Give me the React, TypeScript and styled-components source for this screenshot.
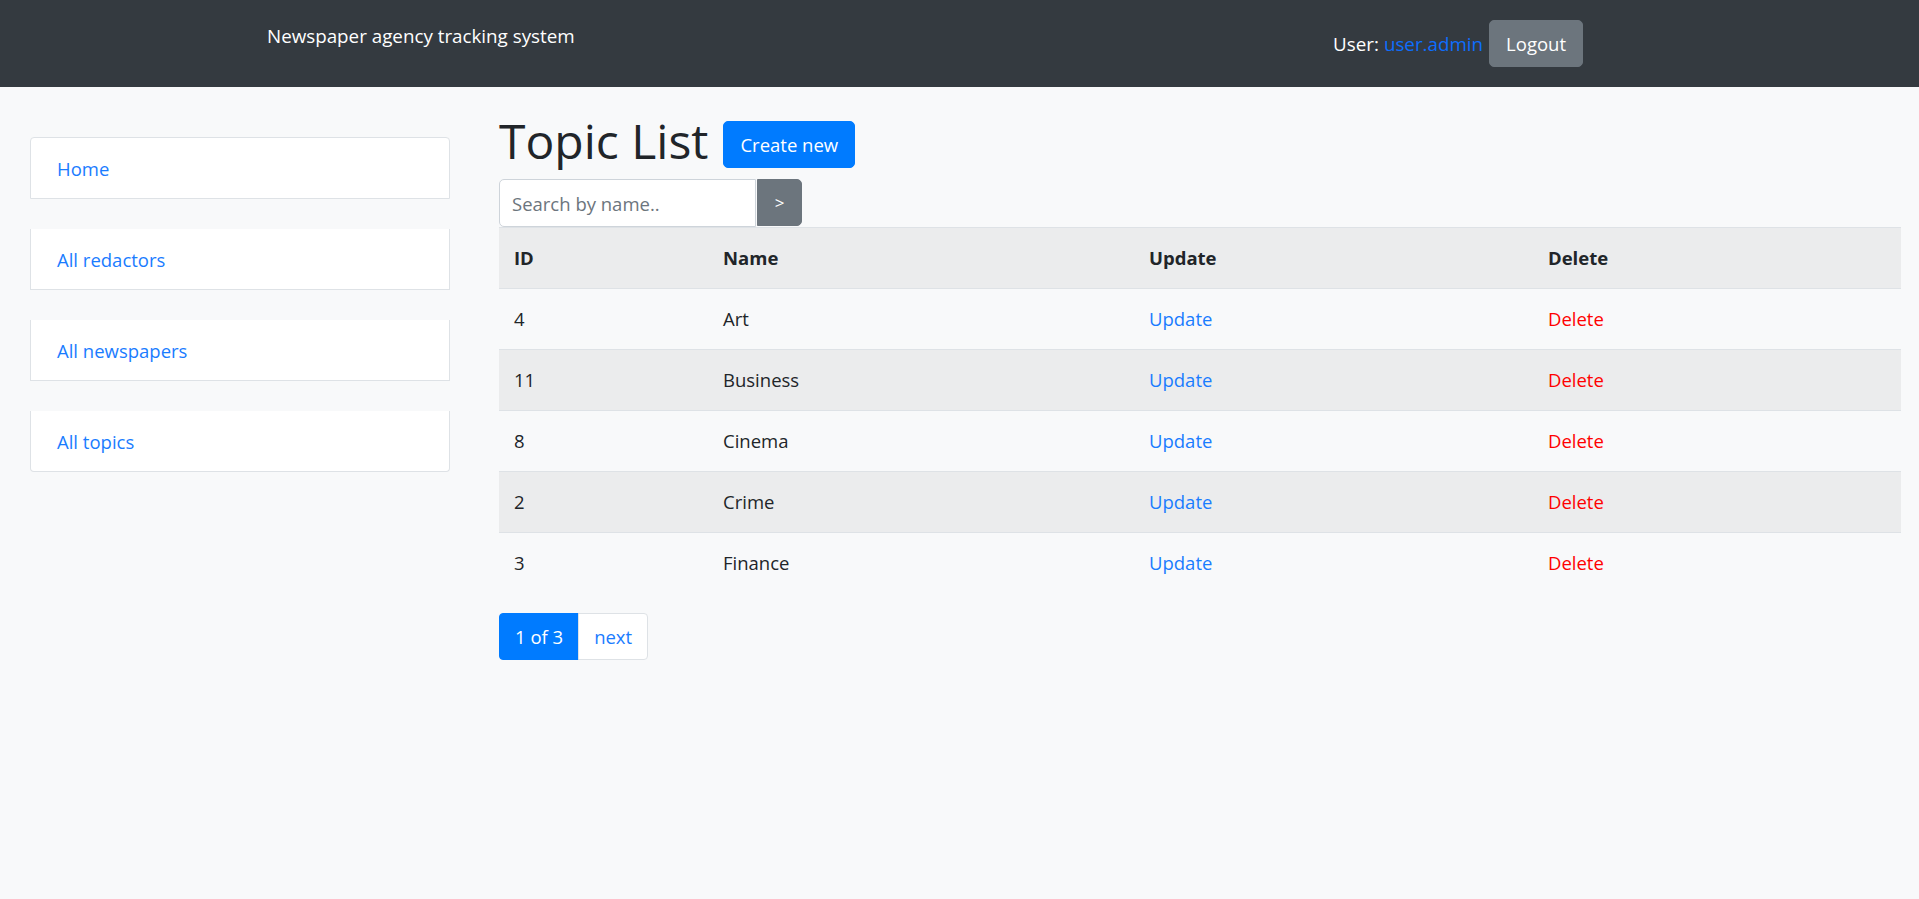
import React from "react";
import styled, { createGlobalStyle } from "styled-components";

const Global = createGlobalStyle`
  html, body { margin: 0; padding: 0; }
  body {
    background: #f8f9fa;
    font-family: "Segoe UI", "Open Sans", "Noto Sans", sans-serif;
    color: #212529;
  }
  * { box-sizing: border-box; }
`;

const Navbar = styled.nav`
  height: 87px;
  background: #343a40;
  display: flex;
  justify-content: space-between;
  align-items: flex-start;
  padding: 20px 336px 0 267px;
`;

const Brand = styled.div`
  color: #fff;
  font-size: 18.8px;
  line-height: 30px;
  margin-top: 1px;
`;

const UserBox = styled.div`
  display: flex;
  align-items: center;
  gap: 6px;
  color: #fff;
  font-size: 18.8px;
`;

const UserLink = styled.a`
  color: #0d6efd;
  text-decoration: none;
  margin-left: 5px;
`;

const Btn = styled.button<{ $variant: "primary" | "secondary" }>`
  font-family: inherit;
  font-size: 18.5px;
  line-height: 29px;
  padding: 8px 16px;
  border-radius: 5px;
  border: 1px solid ${(p) => (p.$variant === "primary" ? "#007bff" : "#6c757d")};
  background: ${(p) => (p.$variant === "primary" ? "#007bff" : "#6c757d")};
  color: #fff;
  cursor: pointer;
`;

const CreateBtn = styled(Btn)`
  margin-top: 6px;
`;

const Page = styled.div`
  display: grid;
  grid-template-columns: 420px 1fr;
  column-gap: 49px;
  padding: 0 18px 0 30px;
`;

const Sidebar = styled.ul`
  list-style: none;
  margin: 50px 0 0;
  padding: 0;
  display: flex;
  flex-direction: column;
  gap: 30px;
`;

const SideItem = styled.li<{ $first?: boolean; $last?: boolean }>`
  background: #fff;
  border: 1px solid #dee2e6;
  border-top-width: ${(p) => (p.$first ? "1px" : "0")};
  border-radius: ${(p) =>
    p.$first ? "4px 4px 0 0" : p.$last ? "0 0 4px 4px" : "0"};
  height: ${(p) => (p.$first ? "62px" : "61px")};
  display: flex;
  align-items: center;
  padding-left: 26px;
`;

const SideLink = styled.a`
  color: #1a7cff;
  text-decoration: none;
  font-size: 18.5px;
`;

const Main = styled.main`
  padding-top: 26px;
`;

const TitleRow = styled.div`
  display: flex;
  align-items: center;
  gap: 15px;
`;

const Title = styled.h1`
  margin: 0;
  font-size: 48px;
  font-weight: 500;
  line-height: 56px;
`;

const SearchForm = styled.form`
  display: flex;
  margin-top: 10px;
`;

const SearchInput = styled.input`
  width: 257px;
  height: 48px;
  border: 1px solid #ced4da;
  border-radius: 5px 0 0 5px;
  background: #fff;
  padding: 0 12px;
  font-family: inherit;
  font-size: 18.5px;
  color: #495057;
  outline: none;
  &::placeholder { color: #6c757d; }
`;

const SearchBtn = styled.button`
  width: 45px;
  height: 47px;
  border: 1px solid #6c757d;
  background: #6c757d;
  color: #fff;
  font-family: inherit;
  font-size: 17px;
  border-radius: 0 5px 5px 0;
  margin-left: 1px;
`;

const Table = styled.table`
  width: 100%;
  border-collapse: collapse;
  font-size: 18.5px;
`;

const Th = styled.th<{ $w: string }>`
  width: ${(p) => p.$w};
  text-align: left;
  font-weight: 700;
  padding: 15px 15px;
  line-height: 30px;
  border-top: 1px solid #dee2e6;
  border-bottom: 1px solid #dee2e6;
  background: #ebeced;
`;

const Tr = styled.tr<{ $striped: boolean; $last: boolean }>`
  background: ${(p) => (p.$striped ? "#ebeced" : "transparent")};
  border-bottom: ${(p) => (p.$last ? "none" : "1px solid #dee2e6")};
`;

const Td = styled.td`
  padding: 15px 15px;
  line-height: 30px;
`;

const CellLink = styled.a<{ $danger?: boolean }>`
  color: ${(p) => (p.$danger ? "#ff0000" : "#1a7cff")};
  text-decoration: none;
`;

const Pager = styled.div`
  display: flex;
  margin-top: 20px;
`;

const PageItem = styled.a<{ $active?: boolean }>`
  font-size: 18.5px;
  line-height: 29px;
  padding: 8px 15px;
  border: 1px solid ${(p) => (p.$active ? "#007bff" : "#dee2e6")};
  background: ${(p) => (p.$active ? "#007bff" : "#fff")};
  color: ${(p) => (p.$active ? "#fff" : "#1a7cff")};
  text-decoration: none;
  border-radius: ${(p) => (p.$active ? "4px 0 0 4px" : "0 4px 4px 0")};
  margin-left: ${(p) => (p.$active ? "0" : "-1px")};
`;

const rows = [
  { id: 4, name: "Art" },
  { id: 11, name: "Business" },
  { id: 8, name: "Cinema" },
  { id: 2, name: "Crime" },
  { id: 3, name: "Finance" },
];

const sideLinks = ["Home", "All redactors", "All newspapers", "All topics"];

export default function App() {
  return (
    <>
      <Global />
      <Navbar>
        <Brand>Newspaper agency tracking system</Brand>
        <UserBox>
          <span>
            User:<UserLink href="#">user.admin</UserLink>
          </span>
          <Btn $variant="secondary">Logout</Btn>
        </UserBox>
      </Navbar>
      <Page>
        <Sidebar>
          {sideLinks.map((l, i) => (
            <SideItem key={l} $first={i === 0} $last={i === sideLinks.length - 1}>
              <SideLink href="#">{l}</SideLink>
            </SideItem>
          ))}
        </Sidebar>
        <Main>
          <TitleRow>
            <Title>Topic List</Title>
            <CreateBtn $variant="primary">Create new</CreateBtn>
          </TitleRow>
          <SearchForm onSubmit={(e) => e.preventDefault()}>
            <SearchInput placeholder="Search by name.." />
            <SearchBtn type="submit">&gt;</SearchBtn>
          </SearchForm>
          <Table>
            <thead>
              <tr>
                <Th $w="209px">ID</Th>
                <Th $w="426px">Name</Th>
                <Th $w="399px">Update</Th>
                <Th $w="368px">Delete</Th>
              </tr>
            </thead>
            <tbody>
              {rows.map((r, i) => (
                <Tr key={r.id} $striped={i % 2 === 1} $last={i === rows.length - 1}>
                  <Td>{r.id}</Td>
                  <Td>{r.name}</Td>
                  <Td>
                    <CellLink href="#">Update</CellLink>
                  </Td>
                  <Td>
                    <CellLink href="#" $danger>
                      Delete
                    </CellLink>
                  </Td>
                </Tr>
              ))}
            </tbody>
          </Table>
          <Pager>
            <PageItem $active href="#">1 of 3</PageItem>
            <PageItem href="#">next</PageItem>
          </Pager>
        </Main>
      </Page>
    </>
  );
}
